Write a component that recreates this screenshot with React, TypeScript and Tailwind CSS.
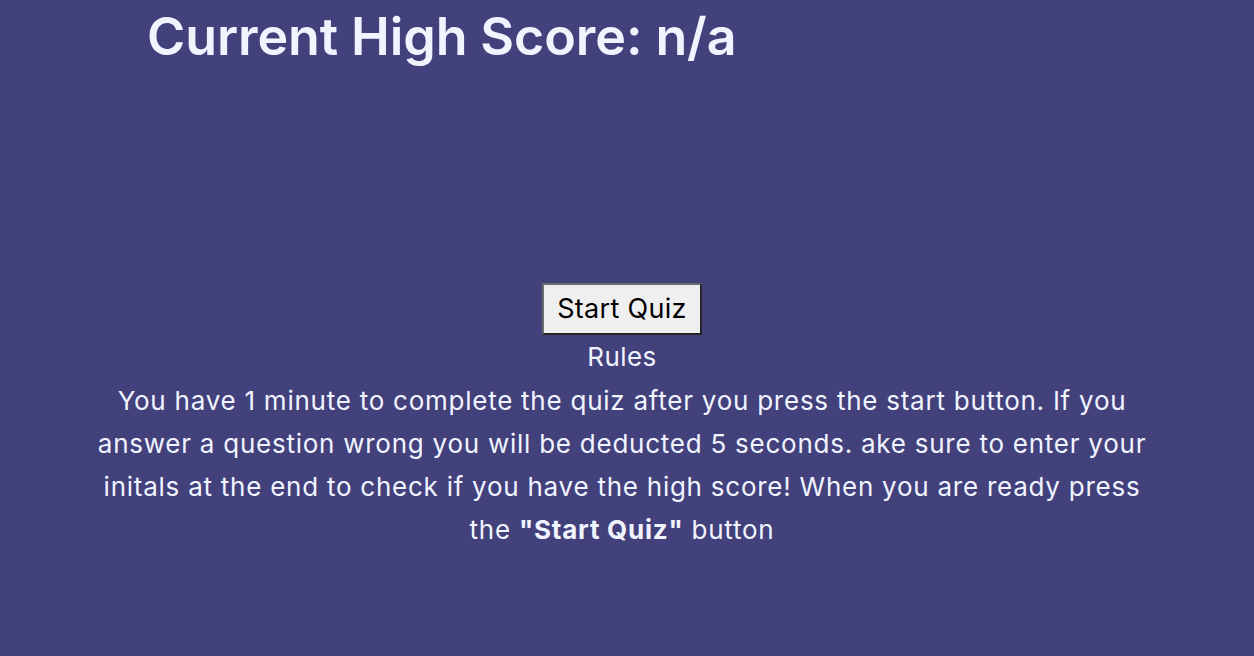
export default function App() {
  return (
    <div className="min-h-screen w-full bg-[#43417c] text-[#f0f4ff] font-['Inter',sans-serif]">
      <header className="pl-[147px] pt-[5px]">
        <h1 className="text-[52px] font-semibold leading-[64px] tracking-[-0.1px]">Current High Score: n/a</h1>
      </header>
      <main className="mt-[214px] flex flex-col items-center text-center pl-[95px] pr-[105px]">
        <button className="bg-[#efefef] text-black text-[27px] leading-[32px] tracking-[0.3px] px-[13px] py-[8px] border-2 border-t-[#6b6b6b] border-l-[#6b6b6b] border-b-[#262626] border-r-[#262626]">
          Start Quiz
        </button>
        <h2 className="mt-[2px] text-[26px] leading-[40px] tracking-[0.4px]">Rules</h2>
        <p className="mt-[2px] text-[26px] leading-[43px] tracking-[0.75px]">
          You have 1 minute to complete the quiz after you press the start button. If you answer a question wrong you will be deducted 5 seconds. ake sure to enter your initals at the end to check if you have the high score! When you are ready press the <strong className="font-bold">"Start Quiz"</strong> button
        </p>
      </main>
    </div>
  )
}
